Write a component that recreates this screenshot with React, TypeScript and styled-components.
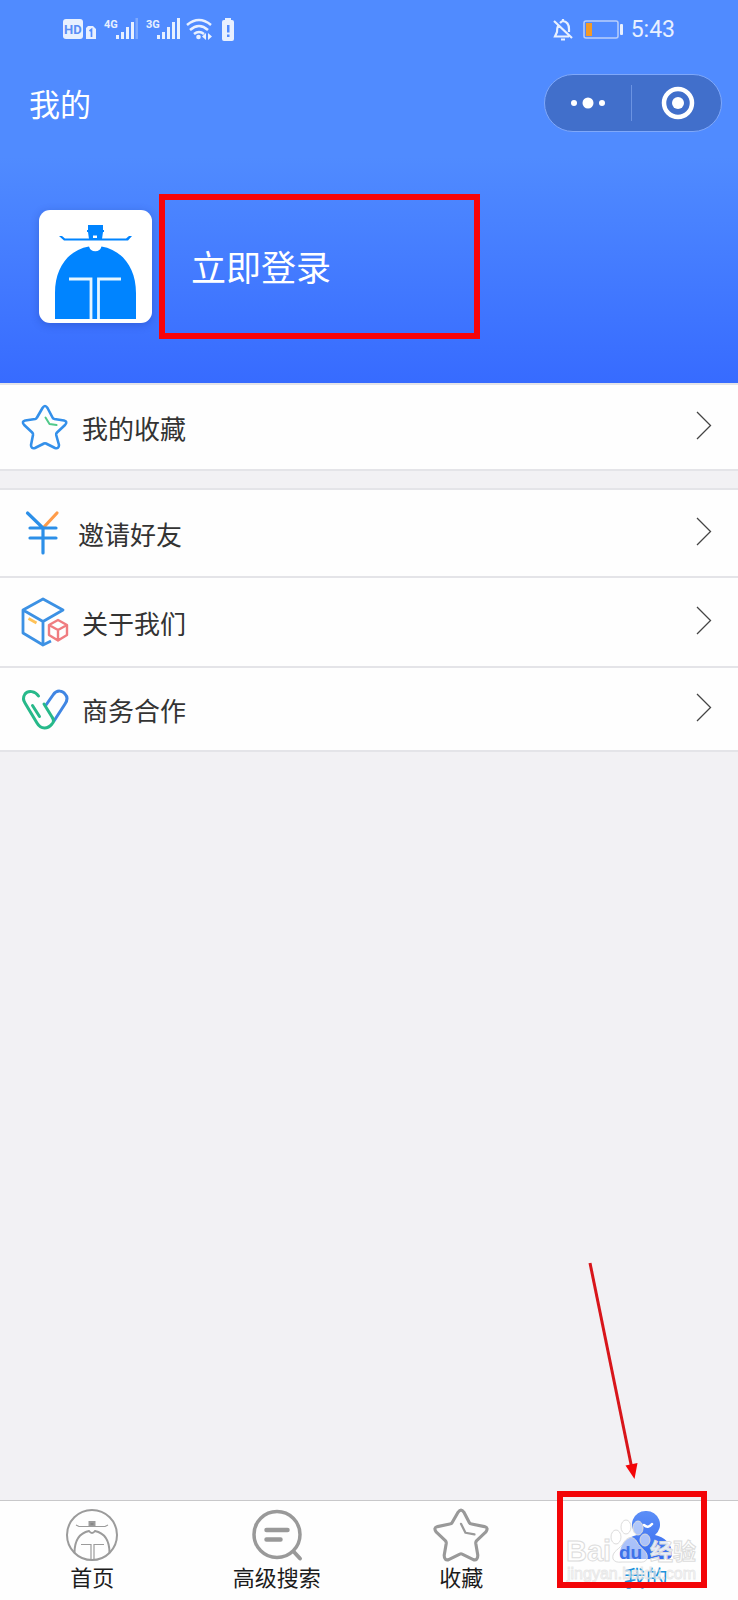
import React from "react";
import styled, { createGlobalStyle } from "styled-components";

const GlobalStyle = createGlobalStyle`
  * { box-sizing: border-box; }
  body {
    margin: 0;
    background: #f2f1f4;
    font-family: "Noto Sans", "Noto Sans CJK SC", sans-serif;
  }
  button, a { font: inherit; color: inherit; }
`;

const Page = styled.div`
  position: relative;
  display: flex;
  flex-direction: column;
  min-height: 100vh;
  font-family: "Noto Sans CJK SC", sans-serif;
  color: #333;
`;

const Header = styled.header`
  display: flex;
  flex-direction: column;
  height: 383px;
  color: #fff;
  background: linear-gradient(#508bff 0, #508bff 41%, #376bff 100%);
`;

const StatusBar = styled.div`
  display: flex;
  justify-content: space-between;
  align-items: center;
  height: 60px;
  padding: 0 63px 0 62px;
  color: #e8f0ff;
`;

const StatusGroup = styled.div`
  display: flex;
  align-items: center;
  gap: 10px;
`;

const Clock = styled.time`
  margin-left: -4px;
  font: 23px/28px Roboto, sans-serif;
`;

const TitleBar = styled.div`
  display: flex;
  justify-content: space-between;
  align-items: center;
  height: 86px;
  padding: 0 16px 0 29px;
`;

const Title = styled.h1`
  margin: 0;
  font-size: 31px;
  font-weight: 400;
  line-height: 40px;
`;

const Capsule = styled.div`
  display: flex;
  align-items: center;
  width: 178px;
  height: 58px;
  border: 1px solid #7fa8fa;
  border-radius: 29px;
  background: #416fcb;
`;

const CapsuleButton = styled.button`
  display: flex;
  flex: 1;
  align-items: center;
  justify-content: center;
  height: 36px;
  padding: 0;
  border: 0;
  background: none;
  & + & {
    padding-left: 4px;
    border-left: 1px solid #6b93e2;
  }
`;

const Profile = styled.div`
  display: flex;
  align-items: center;
  gap: 7px;
  padding: 48px 39px 0;
`;

const Avatar = styled.div`
  display: flex;
  width: 113px;
  height: 113px;
  border-radius: 11px;
  background: #fff;
  box-shadow: 0 2px 8px rgba(20, 50, 140, 0.3);
`;

const LoginButton = styled.button`
  width: 321px;
  height: 145px;
  padding: 0 0 2px 26px;
  border: 6px solid #f80408;
  background: none;
  text-align: left;
  font-size: 35px;
  line-height: 44px;
`;

const Menu = styled.nav`
  border-top: 2px solid #e4e4e8;
  border-bottom: 2px solid #e4e4e8;
  background: #fefefe;
  & + & { margin-top: 17px; }
`;

const MenuItem = styled.a<{ $height: number }>`
  display: flex;
  align-items: center;
  height: ${(p) => p.$height}px;
  padding: 0 26px 0 20px;
  text-decoration: none;
  font-size: 26px;
  line-height: 36px;
  & + & { border-top: 2px solid #e4e4e8; }
`;

const MenuLabel = styled.span`
  flex: 1;
  padding-top: 2px;
  margin-left: 12px;
`;

const TabBar = styled.nav`
  display: grid;
  grid-template-columns: repeat(4, 1fr);
  height: 100px;
  margin-top: auto;
  border-top: 1px solid #c8c8ca;
  background: #fefefe;
`;

const Tab = styled.a<{ $active?: boolean }>`
  display: flex;
  flex-direction: column;
  align-items: center;
  padding-top: 6px;
  text-decoration: none;
  font-size: 22px;
  line-height: 26px;
  color: ${(p) => (p.$active ? "#1c93dc" : "#1c1c1c")};
`;

const TabFrame = styled.div`
  position: absolute;
  right: 31px;
  bottom: 12px;
  width: 150px;
  height: 97px;
  border: 6px solid #f30508;
  pointer-events: none;
`;

const Pointer = styled.svg`
  position: absolute;
  right: 98px;
  bottom: 120px;
  pointer-events: none;
`;

const Watermark = styled.svg`
  position: absolute;
  right: 37px;
  bottom: 18px;
  pointer-events: none;
`;

const StatusIcons = () => (
  <svg width="174" height="28" viewBox="62 16 174 28" fill="#e8f0ff">
    <rect x="63" y="19" width="20" height="20" rx="3" />
    <text x="64" y="34" fontFamily="Roboto" fontWeight="700" fontSize="13" fill="#5a8ef5">HD</text>
    <path d="M88 26h5l3 3v10H86V28z" />
    <path d="M89.500 31l2-1.500V37" fill="none" stroke="#508bff" strokeWidth="1.700" />
    <text x="104" y="28" fontFamily="Roboto" fontWeight="700" fontSize="11">4G</text>
    <path d="M116 35h3v4h-3zM121 32h3v7h-3zM126 27h3v12h-3zM131 22h3v17h-3z" />
    <path d="M135.500 18h2.500v21h-2.500z" opacity=".3" />
    <text x="146" y="28" fontFamily="Roboto" fontWeight="700" fontSize="11">3G</text>
    <path d="M157 35h3v4h-3zM162 32h3v7h-3zM167 27h3v12h-3zM172 22h3v17h-3zM177 18h3v21h-3z" />
    <path d="M187 25q12-10 24 0M190 30q9-8 18 0M194 34q5-4 10 0" fill="none" stroke="#e8f0ff" strokeWidth="2.500" />
    <circle cx="198.500" cy="37" r="2.300" />
    <path d="M206 33v7l-4-3.500zM208 33v7l4-3.500z" />
    <path d="M225 18h6v2h1q2 0 2 2v17q0 2-2 2h-8q-2 0-2-2V22q0-2 2-2h1z" />
    <path d="M227 25h2.500v7.500H227zM227 34.500h2.500V37H227z" fill="#508bff" />
  </svg>
);

const BellOffIcon = () => (
  <svg width="20" height="24" viewBox="0 0 20 24" fill="none" stroke="#e8f0ff" strokeWidth="2.200">
    <path d="M1 3l18 17M5 8q-1 2-1 6l-2 4.500h14M7 5q2-2 3-2 6 1 6 8v3M10 1v2M8 21.500h4" />
  </svg>
);

const LowBatteryIcon = () => (
  <svg width="42" height="22" viewBox="0 0 42 22">
    <rect x="1" y="2" width="34" height="17" rx="2" fill="none" stroke="#b9cffb" strokeWidth="1.500" />
    <path d="M3 4h6v13H3z" fill="#f39a26" />
    <rect x="37" y="5" width="3" height="11" rx="1" fill="#e8f0ff" />
  </svg>
);

const OfficialLogo = () => (
  <svg width="113" height="113" viewBox="0 0 113 113" fill="#0084ff">
    <path d="M49 15h15v5h1v2h-1l-1 7H50l-1-7h-1v-2h1z" />
    <path d="M20 26h3l3 2.500h61l3-2.500h3l-4 4.500H25z" />
    <path d="M54 25.500h4v2.500h-4z" fill="#fff" />
    <path d="M16 109V83c0-25 13-43 34-46.500a6.500 6.500 0 0 0 12.500 0C83.500 40 97 58 97 83v26z" />
    <path d="M30 69h22v40M82 69H59.500v40" fill="none" stroke="#e6f5ff" strokeWidth="2.800" />
  </svg>
);

const ChevronIcon = () => (
  <svg width="16" height="32" viewBox="0 0 16 32" fill="none" stroke="#444" strokeWidth="1.300">
    <path d="M1 1l13.500 13.500L1 28" />
  </svg>
);

const StarIcon = () => (
  <svg width="50" height="50" viewBox="0 0 50 50" fill="none" strokeWidth="2.600" strokeLinejoin="round" strokeLinecap="round">
    <path stroke="#3490ea" d="M22.500 6q2.500-4 5 0l5 9.500q.5 1.200 2 1.500L44 18.500q4 1 1 4.500l-8 7.500q-1 1-.8 2.500L39 43q0 4-4 3l-9-4.500q-1-.5-2 0L15 46q-4 1-4-3l2-10q.2-1.500-.8-2.500l-8-7.500q-3-3.500 1-4.500l10-1.500q1.200-.3 1.800-1.500z" />
    <path stroke="#51c98a" strokeWidth="2" d="M25.500 15.500l4 6.500 7 1" />
  </svg>
);

const YuanIcon = () => (
  <svg width="46" height="50" viewBox="0 0 46 50" fill="none" stroke="#2c8fe8" strokeWidth="3.200" strokeLinecap="round">
    <path stroke="#ff9c4a" d="M24 19L37 5" />
    <path d="M7.500 5L23 20v25M10 20h26M10 30h26" />
  </svg>
);

const BoxIcon = () => (
  <svg width="50" height="50" viewBox="0 0 50 50" fill="none" strokeWidth="2.800" strokeLinejoin="round">
    <path stroke="#3c91e4" d="M31 44l-8 4L3 36V13L23 2l20 11-20 11.500L3 13M23 24v24" />
    <path stroke="#ffc257" d="M8.500 21.500l8 4.500" />
    <path stroke="#ef7c80" strokeWidth="2.400" d="M38 23l9 5v10l-9 5.500-9-5.500V28zM29 28l9 5 9-5M38 33v10" />
  </svg>
);

const HeartIcon = () => (
  <svg width="50" height="50" viewBox="0 0 50 50" fill="none" strokeWidth="3" strokeLinecap="round">
    <path stroke="#4086e3" d="M26 21l7-10c4-6 10-4 12-1 3 3 2 7 0 10L34 37" />
    <path stroke="#27b98a" d="M18.500 12C15.500 7 8 6 5 10c-2 3-2 6 0 9l12 20c4 7 11 6 15 1q3-3 0-7L24 20M12.500 21.500l7 11" />
  </svg>
);

const HomeIcon = () => (
  <svg width="56" height="56" viewBox="0 0 56 56" fill="none" stroke="#9b9b9b" strokeWidth="2">
    <circle cx="28" cy="28" r="25" />
    <path d="M25.500 15h5v4h-5z" fill="#888" />
    <path strokeWidth="1.200" d="M12 18l3 1.500h26l3-1.500M17 37.500h10V53M40 37.500H30V53" />
    <path d="M10.500 46c0-12 5-20 14.500-22q3 4 6 0c9.500 2 14.500 10 14.500 22" />
  </svg>
);

const SearchIcon = () => (
  <svg width="56" height="56" viewBox="0 0 56 56" fill="none" stroke="#999" strokeWidth="3.500" strokeLinecap="round">
    <circle cx="28" cy="27.500" r="23" />
    <path d="M45 45l6 6.500" strokeWidth="4" />
    <path strokeWidth="4.500" d="M17.500 23h21M17.500 32.500h14" />
  </svg>
);

const TabStarIcon = () => (
  <svg width="56" height="56" viewBox="0 0 50 50" fill="none" stroke="#999" strokeWidth="2.800" strokeLinejoin="round" strokeLinecap="round">
    <path d="M22.500 4.500q2.500-3.500 5 0l5 9.500q.5 1 2 1.200L46 17.500q4 1 1 5l-8 7.500q-1 1-.8 2.500L40 43q0 5-4 4l-10-5q-1-.5-2 0l-10 5q-4 1-4-4l1.800-10.500q.2-1.500-.8-2.500L3 22.500q-3-4 1-5l11-2.300q1.500-.2 2-1.200z" />
    <path strokeWidth="2" d="M25 15l4 8 8 1.500" />
  </svg>
);

const PersonIcon = () => (
  <svg width="56" height="56" viewBox="0 0 56 56">
    <defs>
      <linearGradient id="person" x2="0" y2="1">
        <stop stopColor="#5b8ef7" />
        <stop offset="1" stopColor="#386cf0" />
      </linearGradient>
    </defs>
    <path fill="url(#person)" d="M28 4a13.500 13.500 0 0 1 9 24c9 2 17 8 17 19q0 5-5 5H7q-5 0-5-5c0-11 8-17 17-19a13.500 13.500 0 0 1 9-24z" />
    <path d="M26 18q4 4 8-1" fill="none" stroke="#fff" strokeWidth="2.500" strokeLinecap="round" />
  </svg>
);

const menuGroups = [
  [{ label: "我的收藏", icon: <StarIcon />, height: 84 }],
  [
    { label: "邀请好友", icon: <YuanIcon />, height: 86 },
    { label: "关于我们", icon: <BoxIcon />, height: 90 },
    { label: "商务合作", icon: <HeartIcon />, height: 84 },
  ],
];

const tabs = [
  { label: "首页", icon: <HomeIcon /> },
  { label: "高级搜索", icon: <SearchIcon /> },
  { label: "收藏", icon: <TabStarIcon /> },
  { label: "我的", icon: <PersonIcon />, active: true },
];

export default function App() {
  return (
    <Page>
      <GlobalStyle />
      <Header>
        <StatusBar>
          <StatusIcons />
          <StatusGroup>
            <BellOffIcon />
            <LowBatteryIcon />
            <Clock>5:43</Clock>
          </StatusGroup>
        </StatusBar>
        <TitleBar>
          <Title>我的</Title>
          <Capsule>
            <CapsuleButton aria-label="更多">
              <svg width="36" height="12" viewBox="0 0 36 12" fill="#fff">
                <circle cx="4" cy="6" r="3" />
                <circle cx="18" cy="6" r="5.500" />
                <circle cx="32" cy="6" r="3" />
              </svg>
            </CapsuleButton>
            <CapsuleButton aria-label="关闭">
              <svg width="34" height="34" viewBox="0 0 34 34">
                <circle cx="17" cy="17" r="14" fill="none" stroke="#fff" strokeWidth="4.500" />
                <circle cx="17" cy="17" r="6" fill="#fff" />
              </svg>
            </CapsuleButton>
          </Capsule>
        </TitleBar>
        <Profile>
          <Avatar><OfficialLogo /></Avatar>
          <LoginButton>立即登录</LoginButton>
        </Profile>
      </Header>
      {menuGroups.map((items, i) => (
        <Menu key={i}>
          {items.map((item) => (
            <MenuItem key={item.label} href="#" $height={item.height}>
              {item.icon}
              <MenuLabel>{item.label}</MenuLabel>
              <ChevronIcon />
            </MenuItem>
          ))}
        </Menu>
      ))}
      <TabBar>
        {tabs.map((tab) => (
          <Tab key={tab.label} href="#" $active={tab.active}>
            {tab.icon}
            {tab.label}
          </Tab>
        ))}
      </TabBar>
      <Pointer width="56" height="220" viewBox="584 1260 56 220">
        <path d="M590 1263l42 206" stroke="#d8151a" strokeWidth="3" />
        <path d="M625.500 1465.500l12-2.500-3 16z" fill="#f30508" />
      </Pointer>
      <Watermark width="138" height="72" viewBox="563 1510 138 72" fontFamily="Liberation Sans, sans-serif">
        <g fill="#fff" fillOpacity=".55" stroke="#dcdcdc" strokeWidth="1">
          <text x="566" y="1561" fontSize="29" fontWeight="700">Bai</text>
          <ellipse cx="616" cy="1537" rx="5" ry="7" />
          <ellipse cx="626" cy="1527" rx="5" ry="7" />
          <ellipse cx="638" cy="1528" rx="5" ry="7" />
          <ellipse cx="645" cy="1540" rx="5" ry="6" />
          <path d="M613 1559c-2-8 8-10 11-17 4-6 10-6 13 0 3 7 12 9 10 17q-2 4-9 3h-16q-7 1-9-3z" />
          <text x="650" y="1560" fontSize="23" fontWeight="700" fillOpacity=".9" fontFamily="Noto Sans CJK SC">经验</text>
        </g>
        <text x="567" y="1579" fontSize="16" fill="#fff" fillOpacity=".4" stroke="#dedede" strokeWidth="1" strokeOpacity=".7">jingyan.baidu.com</text>
        <text x="619" y="1559" fontSize="19" fontWeight="700" fill="#3e72e8">du</text>
      </Watermark>
      <TabFrame />
    </Page>
  );
}
